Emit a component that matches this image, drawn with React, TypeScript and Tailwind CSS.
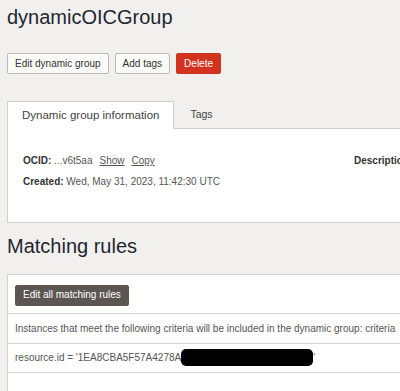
import type { ReactNode } from 'react';

const font = { fontFamily: '"Liberation Sans", Arial, sans-serif' };

function Btn({ children, variant = 'default' }: { children: ReactNode; variant?: 'default' | 'danger' | 'dark' }) {
  const styles = {
    default: 'bg-[#fbfbfa] border-[#b9b9b9] text-[#333]',
    danger: 'bg-[#d2331f] border-[#d2331f] text-white',
    dark: 'bg-[#5c5652] border-[#5c5652] text-white',
  }[variant];
  return (
    <button className={`h-[21px] px-[7px] border rounded-[2px] text-[10px] leading-none ${styles}`}>
      {children}
    </button>
  );
}

export default function App() {
  return (
    <div className="w-[400px] h-[391px] overflow-hidden bg-[#f1f0ee]" style={font}>
      <div className="w-[700px] pl-[7px]">
        {/* page title + actions */}
        <h1 className="pt-[5px] text-[20px] leading-[24px] text-[#1f2630]">dynamicOICGroup</h1>
        <div className="mt-[24px] flex gap-[6px]">
          <Btn>Edit dynamic group</Btn>
          <Btn>Add tags</Btn>
          <Btn variant="danger">Delete</Btn>
        </div>

        {/* tabs */}
        <div className="mt-[27px] flex">
          <div className="h-[28px] px-[14px] flex items-center bg-white border border-b-0 border-[#cfcfcf] text-[11.5px] text-[#444]">
            Dynamic group information
          </div>
          <div className="flex-1 h-[28px] pl-[16px] flex items-center border-b border-[#cfcfcf] text-[10.5px] text-[#444]">
            Tags
          </div>
        </div>
        <div className="h-[94px] bg-white border border-t-0 border-[#cfcfcf] pl-[15px] pt-[25px] text-[10px] leading-[14px]">
          <div className="flex">
            <div className="w-[331px]">
              <div className="flex gap-[7px] text-[#555]">
                <span>
                  <b className="text-[#333]">OCID:</b> ...v6t5aa
                </span>
                <span className="underline">Show</span>
                <span className="underline">Copy</span>
              </div>
              <div className="mt-[7px] text-[#555]">
                <b className="text-[#333]">Created:</b> Wed, May 31, 2023, 11:42:30 UTC
              </div>
            </div>
            <div className="font-bold text-[#333]">Description</div>
          </div>
        </div>

        {/* matching rules */}
        <h2 className="mt-[11px] text-[20px] leading-[24px] text-[#1f2630]">Matching rules</h2>
        <div className="mt-[16px] h-[200px] bg-white border border-[#d3d3d3]">
          <div className="px-[7px] pt-[6px] pb-[7px]">
            <Btn variant="dark">Edit all matching rules</Btn>
          </div>
          <div className="h-[30px] flex items-center border-t border-[#d3d3d3] px-[7px] text-[10px] text-[#555]">
            Instances that meet the following criteria will be included in the dynamic group: criteria
          </div>
          <div className="h-[30px] flex items-center border-y border-[#d3d3d3] px-[7px] text-[10px] text-[#555]">
            resource.id = '1EA8CBA5F57A4278A
            <span className="inline-block w-[132px] h-[17px] bg-black rounded-[5px]" />'
          </div>
        </div>
      </div>
    </div>
  );
}
